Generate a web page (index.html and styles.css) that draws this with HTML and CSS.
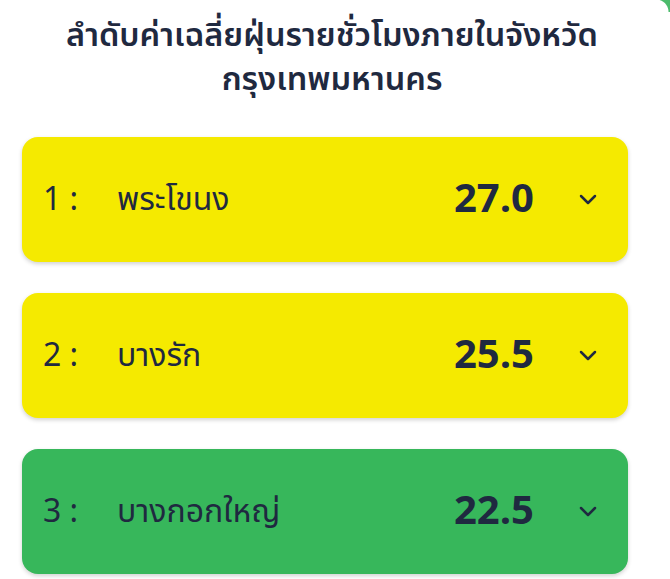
FILE: index.html
```html
<!DOCTYPE html>
<html lang="th">
<head>
<meta charset="utf-8">
<link rel="stylesheet" href="styles.css">
</head>
<body>
<div class="panel">
  <h1 class="title">ลำดับค่าเฉลี่ยฝุ่นรายชั่วโมงภายในจังหวัด<br>กรุงเทพมหานคร</h1>
  <div class="list">
    <div class="card yellow">
      <span class="rank">1 :</span>
      <span class="name">พระโขนง</span>
      <span class="value">27.0</span>
      <svg class="chev" width="20" height="12" viewBox="0 0 20 12"><path d="M3 2 L10 9 L17 2" fill="none" stroke="#1f2940" stroke-width="2.5" stroke-linecap="round" stroke-linejoin="round"/></svg>
    </div>
    <div class="card yellow">
      <span class="rank">2 :</span>
      <span class="name">บางรัก</span>
      <span class="value">25.5</span>
      <svg class="chev" width="20" height="12" viewBox="0 0 20 12"><path d="M3 2 L10 9 L17 2" fill="none" stroke="#1f2940" stroke-width="2.5" stroke-linecap="round" stroke-linejoin="round"/></svg>
    </div>
    <div class="card green">
      <span class="rank">3 :</span>
      <span class="name">บางกอกใหญ่</span>
      <span class="value">22.5</span>
      <svg class="chev" width="20" height="12" viewBox="0 0 20 12"><path d="M3 2 L10 9 L17 2" fill="none" stroke="#1f2940" stroke-width="2.5" stroke-linecap="round" stroke-linejoin="round"/></svg>
    </div>
  </div>
</div>
</body>
</html>
```
FILE: styles.css
```css
html, body {
  margin: 0;
  padding: 0;
  background: #ffffff;
}
body {
  font-family: "Noto Sans Thai", "Noto Sans", "DejaVu Sans", sans-serif;
  color: #1f2940;
  position: relative;
  width: 670px;
  height: 579px;
  overflow: hidden;
}
body::after {
  content: "";
  position: absolute;
  top: 0;
  right: 0;
  width: 14px;
  height: 12px;
  background: radial-gradient(circle at 0 100%, transparent 12px, #4cbb6c 13px);
}
.panel {
  padding: 15px 42px 0 22px;
}
.title {
  margin: 0;
  text-align: center;
  font-size: 32.5px;
  font-weight: 600;
  line-height: 44px;
  color: #1f2940;
  padding-left: 14px;
}
.list {
  display: flex;
  flex-direction: column;
  gap: 31px;
  margin-top: 34px;
}
.card {
  height: 125px;
  border-radius: 16px;
  display: flex;
  align-items: center;
  padding: 0 30px 0 21px;
  box-shadow: 0 2px 4px rgba(0,0,0,0.18);
}
.yellow { background: #f5ea00; }
.green { background: #37b75b; }
.rank {
  width: 74px;
  font-size: 32px;
  color: #1f2940;
}
.name {
  flex: 1;
  font-size: 32px;
  color: #1f2940;
}
.value {
  font-size: 40px;
  font-weight: 700;
  color: #1f2940;
  margin-right: 44px;
}
.chev {
  display: block;
}
```
